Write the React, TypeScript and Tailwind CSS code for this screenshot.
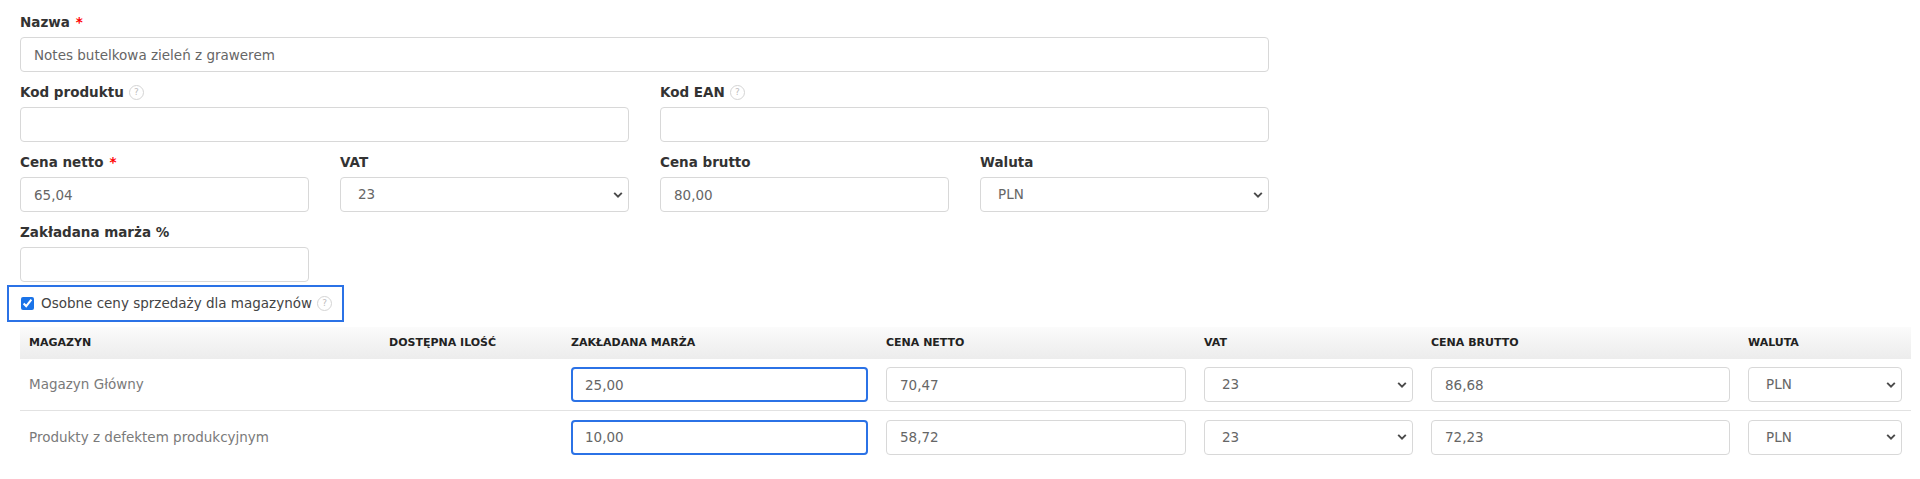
import React from 'react'

const inputCls =
  'block w-full h-[35px] rounded-[4px] border border-[#d8d8d8] bg-white pl-[13px] text-[13.5px] text-[#666] outline-none'

function Help() {
  return (
    <span className="ml-[5px] inline-flex h-[15px] w-[15px] items-center justify-center rounded-full border border-[#d4d4d4] text-[9px] font-normal leading-none text-[#bdbdbd]">
      ?
    </span>
  )
}

function Chevron() {
  return (
    <svg
      className="pointer-events-none absolute right-[6px] top-1/2 -translate-y-1/2"
      width="10"
      height="7"
      viewBox="0 0 10 7"
      fill="none"
    >
      <path d="M1.2 1.4 L5 5.2 L8.8 1.4" stroke="#4a4a4a" strokeWidth="1.9" />
    </svg>
  )
}

function Select({ value, focused = false }: { value: string; focused?: boolean }) {
  return (
    <div className="relative h-[35px] w-full">
      <select
        defaultValue={value}
        className={
          'block h-full w-full appearance-none rounded-[4px] border bg-white pl-[17px] text-[13.5px] text-[#666] outline-none ' +
          (focused ? 'border-2 border-[#2b72e6]' : 'border-[#d8d8d8]')
        }
      >
        <option value={value}>{value}</option>
      </select>
      <Chevron />
    </div>
  )
}

function Label({ text, required, help }: { text: string; required?: boolean; help?: boolean }) {
  return (
    <div className="mb-[5px] flex h-[20px] items-center text-[13.5px] font-bold leading-[20px] text-[#333]">
      <span>{text}</span>
      {required && <span className="ml-[6px] text-[#f00]">*</span>}
      {help && <Help />}
    </div>
  )
}

function Field({
  label,
  value = '',
  required,
  help,
  select,
  last,
}: {
  label: string
  value?: string
  required?: boolean
  help?: boolean
  select?: boolean
  last?: boolean
}) {
  return (
    <div className={last ? 'mb-[3px]' : 'mb-[10px]'}>
      <Label text={label} required={required} help={help} />
      {select ? <Select value={value} /> : <input className={inputCls} defaultValue={value} readOnly />}
    </div>
  )
}

const cols = 'grid grid-cols-[360px_182px_315px_318px_227px_317px_172px]'

const headers = ['Magazyn', 'Dostępna ilość', 'Zakładana marża', 'Cena netto', 'VAT', 'Cena brutto', 'Waluta']

const rows = [
  { name: 'Magazyn Główny', margin: '25,00', net: '70,47', vat: '23', gross: '86,68', cur: 'PLN' },
  { name: 'Produkty z defektem produkcyjnym', margin: '10,00', net: '58,72', vat: '23', gross: '72,23', cur: 'PLN' },
]

export default function App() {
  return (
    <div className="min-h-screen bg-white pl-[20px] pr-[9px] pt-[12px] font-['DejaVu_Sans',Verdana,sans-serif]">
      <div className="w-[1249px]">
        <Field label="Nazwa" required value="Notes butelkowa zieleń z grawerem" />
        <div className="grid grid-cols-2 gap-x-[31px]">
          <Field label="Kod produktu" help />
          <Field label="Kod EAN" help />
        </div>
        <div className="grid grid-cols-4 gap-x-[31px]">
          <Field label="Cena netto" required value="65,04" />
          <Field label="VAT" select value="23" />
          <Field label="Cena brutto" value="80,00" />
          <Field label="Waluta" select value="PLN" />
        </div>
        <div className="grid grid-cols-4 gap-x-[31px]">
          <Field label="Zakładana marża %" last />
        </div>
      </div>

      <div className="-ml-[13px] flex h-[37px] w-[337px] items-center border-2 border-[#2b72e6] pl-[12px]">
        <input type="checkbox" defaultChecked className="m-0 h-[13px] w-[13px] accent-[#1a73e8]" />
        <span className="ml-[7px] text-[13.5px] text-[#444]">Osobne ceny sprzedaży dla magazynów</span>
        <Help />
      </div>

      <div className="mt-[5px] w-[1891px]">
        <div className={cols + ' h-[32px] items-center bg-gradient-to-b from-[#fbfbfb] to-[#ececec]'}>
          {headers.map((h) => (
            <div key={h} className="px-[9px] text-[11px] font-bold uppercase text-[#222]">
              {h}
            </div>
          ))}
        </div>
        {rows.map((r, i) => (
          <div
            key={r.name}
            className={cols + ' h-[52px] items-center ' + (i === 0 ? 'border-b border-[#e2e2e2]' : '')}
          >
            <div className="px-[9px] text-[13.5px] text-[#7a7a7a]">{r.name}</div>
            <div className="px-[9px]" />
            <div className="px-[9px]">
              <input
                className="block h-[35px] w-full rounded-[4px] border-2 border-[#2b72e6] bg-white pl-[12px] text-[13.5px] text-[#666] outline-none"
                defaultValue={r.margin}
                readOnly
              />
            </div>
            <div className="px-[9px]">
              <input className={inputCls} defaultValue={r.net} readOnly />
            </div>
            <div className="px-[9px]">
              <Select value={r.vat} />
            </div>
            <div className="px-[9px]">
              <input className={inputCls} defaultValue={r.gross} readOnly />
            </div>
            <div className="px-[9px]">
              <Select value={r.cur} />
            </div>
          </div>
        ))}
      </div>
    </div>
  )
}
